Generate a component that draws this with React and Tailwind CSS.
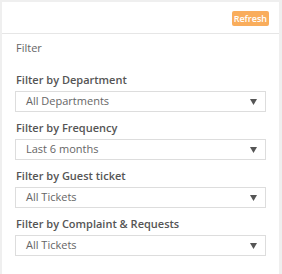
import React from 'react'

const filters = [
  { label: 'Filter by Department', value: 'All Departments' },
  { label: 'Filter by Frequency', value: 'Last 6 months' },
  { label: 'Filter by Guest ticket', value: 'All Tickets' },
  { label: 'Filter by Complaint & Requests', value: 'All Tickets' },
]

const SelectBox = ({ value }) => (
  <div className="mt-[3px] flex h-[21px] items-center justify-between border border-[#dddddd] bg-white pl-[10px] pr-[8px]">
    <span className="text-[11px] text-[#666666]">{value}</span>
    <svg width="7" height="6" viewBox="0 0 7 6" className="mt-[1px]">
      <path d="M0 0 H7 L3.5 6 Z" fill="#555555" />
    </svg>
  </div>
)

const App = () => {
  return (
    <div className="h-[274px] w-[282px] overflow-hidden bg-[#efefef] pl-[2px] pt-[2px] font-['Open_Sans',sans-serif]">
      <div className="h-[272px] w-[277px] bg-white">
        <div className="flex h-[32px] justify-end border-b border-[#e6e6e6] pr-[10px] pt-[9px]">
          <button className="h-[15px] rounded-[2px] bg-[#f9ad5c] px-[2px] text-[9px] font-semibold leading-[15px] text-white">
            Refresh
          </button>
        </div>
        <div className="px-[13px]">
          <div className="mt-[6px] pl-[1px] text-[11px] leading-[16px] text-[#666666]">Filter</div>
          <div className="mt-[16px]">
            {filters.map((f, i) => (
              <div key={i} className="mb-[8px]">
                <div className="pl-[1px] text-[11px] font-semibold leading-[16px] text-[#555555]">{f.label}</div>
                <SelectBox value={f.value} />
              </div>
            ))}
          </div>
        </div>
      </div>
    </div>
  )
}

export default App
